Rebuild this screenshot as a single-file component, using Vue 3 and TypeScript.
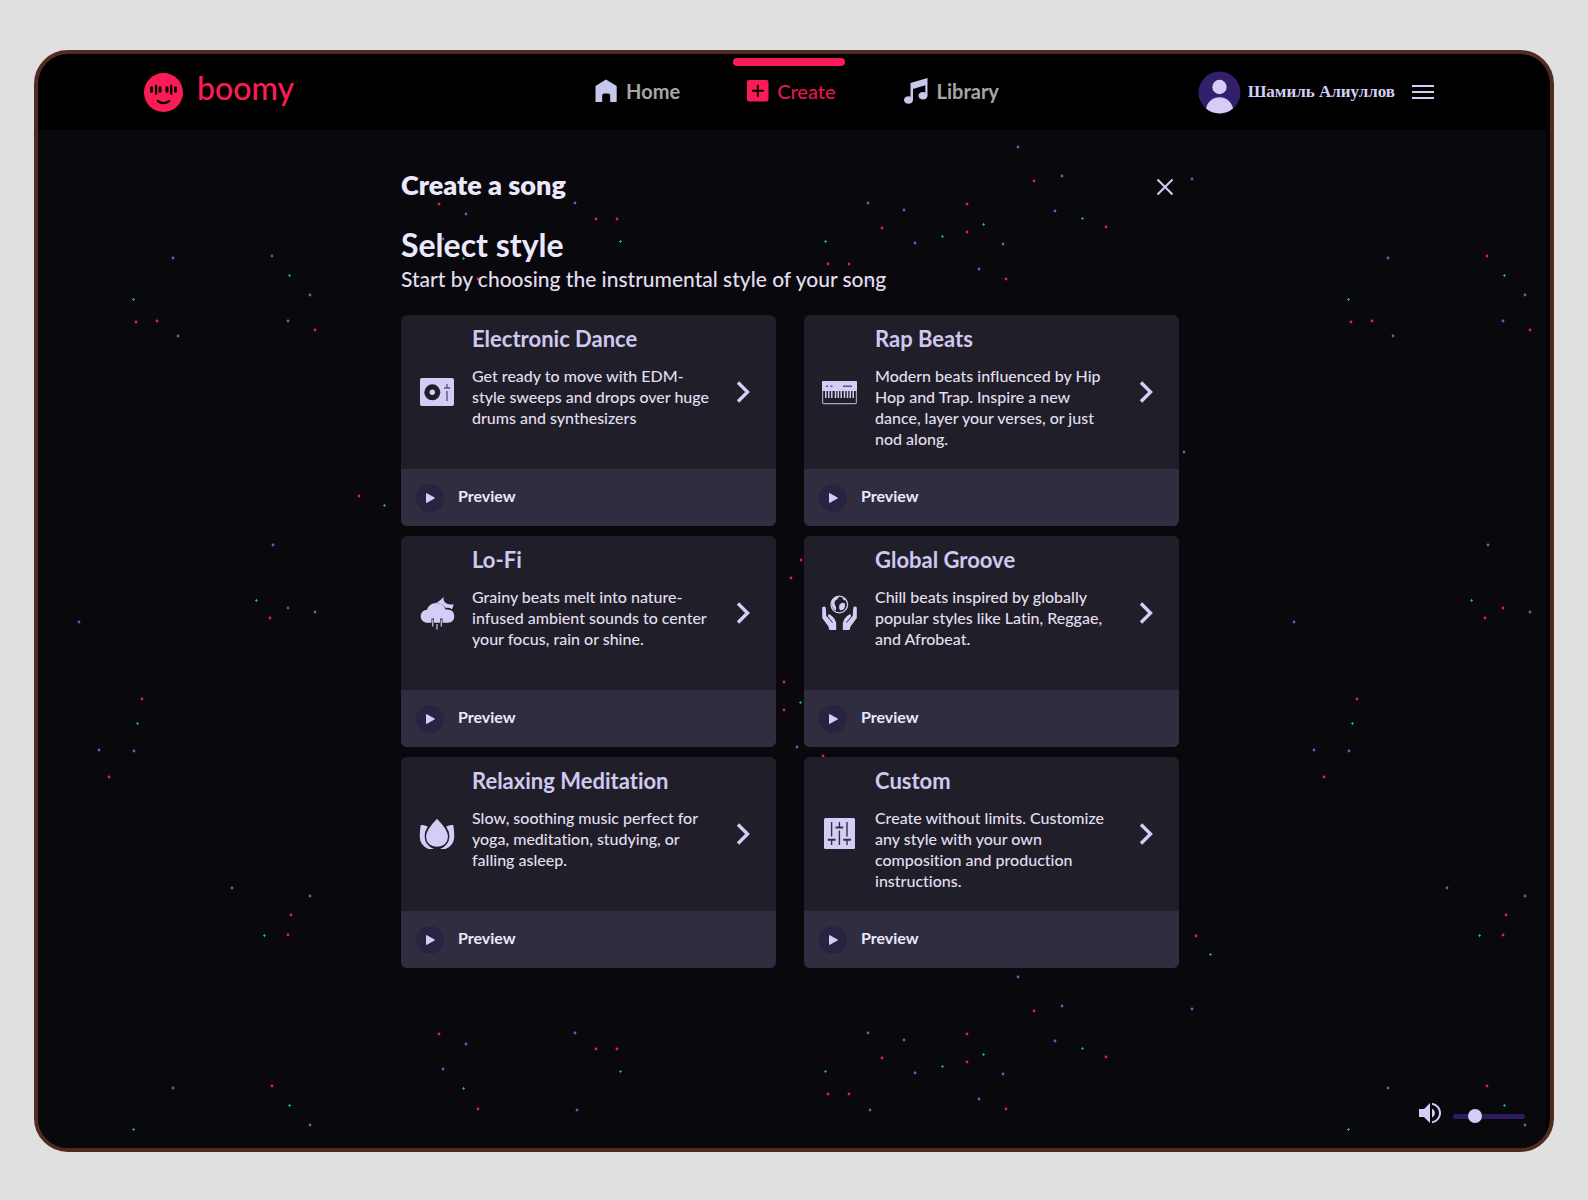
<script setup lang="ts">
import { ref } from 'vue'

type Point = [number, number]

interface Style {
  id: string
  title: string
  text: string
}

const styles: Style[] = [
  { id: 'edm', title: 'Electronic Dance', text: 'Get ready to move with EDM-style sweeps and drops over huge drums and synthesizers' },
  { id: 'rap', title: 'Rap Beats', text: 'Modern beats influenced by Hip Hop and Trap. Inspire a new dance, layer your verses, or just nod along.' },
  { id: 'lofi', title: 'Lo-Fi', text: 'Grainy beats melt into nature-infused ambient sounds to center your focus, rain or shine.' },
  { id: 'global', title: 'Global Groove', text: 'Chill beats inspired by globally popular styles like Latin, Reggae, and Afrobeat.' },
  { id: 'relax', title: 'Relaxing Meditation', text: 'Slow, soothing music perfect for yoga, meditation, studying, or falling asleep.' },
  { id: 'custom', title: 'Custom', text: 'Create without limits. Customize any style with your own composition and production instructions.' },
]

const volume = ref(26)

// Star positions inside one repeating tile of the night sky.
const violet: Point[] = [
  [980, 17], [1024, 46], [1154, 49], [1017, 81], [537, 73], [428, 84], [830, 73], [866, 80], [877, 113],
  [965, 114], [941, 139], [135, 128], [272, 165], [250, 191], [140, 206], [405, 109], [539, 150], [832, 150],
  [1146, 322], [235, 415], [41, 492], [277, 482], [61, 620], [96, 621], [194, 758], [272, 766], [759, 617],
]
const red: Point[] = [
  [996, 51], [401, 74], [558, 89], [579, 89], [929, 74], [844, 98], [929, 102], [1068, 97], [790, 134],
  [811, 134], [968, 149], [234, 126], [98, 192], [119, 191], [277, 200], [440, 149], [321, 366], [250, 478],
  [232, 488], [763, 430], [753, 448], [104, 569], [71, 647], [746, 552], [746, 580], [253, 785], [250, 805],
  [1158, 806], [785, 626],
]
const green: Point[] = [
  [582, 111], [787, 111], [945, 94], [904, 106], [1044, 88], [251, 145], [95, 169], [425, 128], [346, 375],
  [218, 470], [762, 572], [99, 593], [226, 805], [1172, 824],
]
</script>

<template>
  <div class="frame">
    <header class="topbar">
      <a class="brand" href="#">
        <svg width="39" height="39" viewBox="0 0 39 39" aria-hidden="true">
          <circle cx="19.5" cy="19.5" r="19.5" fill="#fb1c56" />
          <g stroke="#000" stroke-linecap="round" fill="none">
            <path stroke-width="3" d="M7.500 14.800v3.500M16 14.800v3.500M23 14.800v3.500M31.500 14.800v3.500" />
            <path stroke-width="2.200" d="M12 12.800v8M27.200 12.800v8" />
            <path stroke-width="2.200" d="M13.800 28q5.700 4.200 11.400 0" />
          </g>
        </svg>
        <span>boomy</span>
      </a>
      <nav class="nav">
        <a class="link" href="#">
          <svg width="24" height="26" viewBox="0 0 24 26" aria-hidden="true"><path fill="#c5c8ea" d="M12 1.500 22.700 8v15.500q0 .5-.5.500h-6v-6.500q0-2-2-2h-4q-2 0-2 2V24h-6.200q-.5 0-.5-.5V8z" /></svg>
          <span>Home</span>
        </a>
        <a class="link active" href="#" aria-current="page">
          <svg width="22" height="26" viewBox="0 0 22 26" aria-hidden="true"><rect x="0" y="2" width="21.500" height="21.500" rx="2" fill="#fb1c56" /><path stroke="#000" stroke-width="2" d="M4.800 12.800h12M10.800 6.800v12" /></svg>
          <span>Create</span>
        </a>
        <a class="link" href="#">
          <svg width="26" height="28" viewBox="0 0 26 28" aria-hidden="true">
            <path fill="#c5c8ea" d="M7.500 6 24.500 1v17.500h-2.200V8.300L10 12v11H7.500z" />
            <ellipse cx="5.500" cy="23" rx="4.500" ry="3.800" fill="#c5c8ea" />
            <ellipse cx="20" cy="18.700" rx="4.500" ry="3.800" fill="#c5c8ea" />
          </svg>
          <span>Library</span>
        </a>
      </nav>
      <div class="account">
        <svg width="43" height="43" viewBox="0 0 43 43" aria-hidden="true">
          <circle cx="21.500" cy="21.500" r="21" fill="#33206a" />
          <circle cx="21.500" cy="16" r="7.200" fill="#d5cdf5" />
          <path fill="#d5cdf5" d="M8 37.600a13.700 13.700 0 0 1 27 0A21 21 0 0 1 8 37.600z" />
        </svg>
        <span class="name">Шамиль Алиуллов</span>
        <button class="plain" type="button" aria-label="Menu">
          <svg width="22" height="16" viewBox="0 0 22 16" aria-hidden="true"><path stroke="#d5cdf5" stroke-width="2" d="M0 2h22M0 8h22M0 14h22" /></svg>
        </button>
      </div>
    </header>

    <main class="stage">
      <svg class="sky" width="100%" height="100%" aria-hidden="true">
        <defs>
          <pattern id="stars" width="1215" height="830" patternUnits="userSpaceOnUse">
            <circle v-for="(p, i) in violet" :key="'v' + i" :cx="p[0]" :cy="p[1]" r="1.400" fill="#6c5abf" />
            <circle v-for="(p, i) in red" :key="'r' + i" :cx="p[0]" :cy="p[1]" r="1.400" fill="#e81a50" />
            <path v-for="(p, i) in green" :key="'g' + i" :d="`M${p[0] - 1} ${p[1] + 0.5}h3M${p[0] + 0.5} ${p[1] - 1}v3`" stroke="#1a9c8c" />
          </pattern>
        </defs>
        <rect width="100%" height="100%" fill="url(#stars)" />
      </svg>

      <section class="content">
        <div class="heading">
          <h1>Create a song</h1>
          <button class="plain" type="button" aria-label="Close">
            <svg width="18" height="18" viewBox="0 0 18 18" aria-hidden="true"><path stroke="#d5cdf5" stroke-width="2" d="m1.500 1.500 15 15m0-15-15 15" /></svg>
          </button>
        </div>
        <h2>Select style</h2>
        <p class="lead">Start by choosing the instrumental style of your song</p>

        <div class="cards">
          <article v-for="s in styles" :key="s.id" class="card">
            <button class="choose" type="button">
              <svg class="icon" width="36" height="36" viewBox="0 0 36 36" aria-hidden="true" fill="#d5cdf5">
                <template v-if="s.id === 'edm'">
                  <rect x="1" y="4" width="34" height="28" rx="2" />
                  <circle cx="13.300" cy="18.300" r="8" fill="#201f29" />
                  <circle cx="13.300" cy="18.300" r="2.700" />
                  <path stroke="#5d5870" stroke-width="1.400" d="M25 14h6.200M28 10v4M28 17v10" />
                </template>
                <template v-else-if="s.id === 'rap'">
                  <rect x=".6" y="7.600" width="33.800" height="22" rx="1" fill="none" stroke="#a7a0c5" stroke-width="1.200" />
                  <rect x="0" y="7" width="35" height="10" rx="1" />
                  <path stroke="#5d5870" stroke-width="1.600" d="M4 12.300h2M8.500 12.300h2M21 12.300h9" />
                  <path stroke="#d5cdf5" stroke-width="1.500" d="M3.800 16v8M6.800 16v8M9.800 16v8M13.500 16v8M16.300 16v8M19.200 16v8M22.500 16v8M25.500 16v8M28.300 16v8M31.200 16v8" />
                </template>
                <template v-else-if="s.id === 'lofi'">
                  <path d="M15.500 8.500Q21 6.500 24.500 1.700q-.5 4.500 2.500 6.500 3 1.700 7.500 1-.2 3-1.600 5-3-2-6-1.300Q22 6.800 15.500 8.500z" />
                  <path d="M7 27.700a6.500 6.500 0 0 1 1-12.900 9.800 9.800 0 0 1 18.500-.3q8-1 8.800 6.200.1 6.500-6.500 7z" />
                  <path stroke="#201f29" stroke-width="2.400" d="M13.700 23.500v5M18 28.500v3M22.300 23.500v5" />
                  <path stroke="#b4add0" stroke-width="1.400" d="M13.700 24.500v7M18 29v5.500M22.300 24.500v7" />
                </template>
                <template v-else-if="s.id === 'global'">
                  <circle cx="17.300" cy="9.500" r="8.300" fill="none" stroke="#d5cdf5" stroke-width="1.300" />
                  <path d="M10 5q3-4.200 7-4-.5 2.300-2 3.600-3 1.400-2.300 4.600 2.300 3 1.300 6.500Q8 12.500 10 5zM17.500 9.500q3-3.200 5.500-.8.600 3-1.500 5.800l-3.500 1q-1.500-3-.5-6zM20 1.800q3 1.700 4 3.800l-2.500-.5z" />
                  <path d="M.2 12.500q1.800-1.800 3.500 0l.6 8 2 2.200q-1-3 1-3.400 5.700 3.300 6.900 8.700v7H7.500q-.2-3.800-3.300-6.500L.2 23z" />
                  <path d="M34.800 12.500q-1.800-1.800-3.500 0l-.6 8-2 2.200q1-3-1-3.400-5.700 3.300-6.900 8.700v7h6.700q.2-3.800 3.300-6.500l4-5.500z" />
                  <path fill="none" stroke="#201f29" d="m4.500 20.500 6 7M30.500 20.500l-6 7" />
                </template>
                <template v-else-if="s.id === 'relax'">
                  <path d="M18 2.700Q29 14 29 20.500q-.5 9.700-11 10.300Q7.500 30.200 7 20.500 7 14 18 2.700z" />
                  <path d="M1.800 9q3.500-.5 7 1.500-3.300 5-3.200 10Q6 29.500 15 33H9.500Q1 29.500.700 20.500q0-6.500 1.100-11.500zM34.200 9q-3.500-.5-7 1.500 3.300 5 3.200 10-.4 9-9.400 12.500h5.500q8.500-3.500 8.800-12.500 0-6.500-1.100-11.500z" />
                </template>
                <template v-else>
                  <rect x="2" y="2" width="31" height="31" rx="1.500" />
                  <g fill="none" stroke="#33313e" stroke-width="1.400">
                    <path d="M9.600 6v14.500M9.600 24v5M17.400 6v5M25 6v14.500M25 24v5M17.400 14.500V29" />
                    <path stroke-width="2" d="M5.700 23.800h7.800M13.600 11.500h7.600M21.200 23.800H29" />
                  </g>
                </template>
              </svg>
              <span class="copy">
                <span class="title">{{ s.title }}</span>
                <span class="text">{{ s.text }}</span>
              </span>
              <svg class="chevron" width="14" height="22" viewBox="0 0 14 22" aria-hidden="true"><path fill="none" stroke="#d5cdf5" stroke-width="3.400" d="m2 1.500 9.500 9.500L2 20.500" /></svg>
            </button>
            <button class="preview" type="button">
              <svg width="28" height="28" viewBox="0 0 28 28" aria-hidden="true">
                <circle cx="14" cy="14" r="14" fill="#292341" />
                <path fill="#d5cdf5" stroke="#d5cdf5" stroke-linejoin="round" d="M10.500 9.500 18.500 14l-8 4.500z" />
              </svg>
              <span>Preview</span>
            </button>
          </article>
        </div>
      </section>

      <div class="player">
        <svg width="22" height="22" viewBox="0 0 22 22" aria-hidden="true">
          <path fill="#d5cdf5" d="M0 7h5l6-6v20l-6-6H0zM13 6.500q3 1.700 3 4.500t-3 4.500z" />
          <path fill="none" stroke="#d5cdf5" stroke-width="2" d="M13 1.700a9.400 9.400 0 0 1 0 18.600" />
        </svg>
        <input v-model="volume" type="range" min="0" max="100" aria-label="Volume" />
      </div>
    </main>
  </div>
</template>

<style>
body {
  background: #e0e0e0;
}
</style>

<style scoped>
.frame {
  box-sizing: border-box;
  display: flex;
  flex-direction: column;
  min-height: calc(100vh - 98px);
  margin: 50px 34px 48px;
  border: 4px solid #532a22;
  border-radius: 34px;
  overflow: hidden;
  background: #000;
  font-family: Lato, "Open Sans", sans-serif;
  font-variant-ligatures: none;
  color: #ece8fb;
}
h1,
h2,
p {
  margin: 0;
}
a {
  color: inherit;
  text-decoration: none;
}
button {
  border: 0;
  padding: 0;
  background: none;
  color: inherit;
  font: inherit;
  font-variant-ligatures: none;
  text-align: left;
  cursor: pointer;
}
svg {
  display: block;
  flex: none;
}
.topbar {
  display: grid;
  grid-template-columns: 1fr auto 1fr;
  align-items: center;
  height: 76px;
  padding: 0 106px;
}
.brand {
  display: flex;
  align-items: center;
  gap: 14px;
  color: #fb1c56;
  font-size: 32px;
  font-weight: 500;
  line-height: 36px;
}
.brand span {
  padding-bottom: 8px;
}
.nav {
  display: flex;
  align-self: stretch;
  gap: 44px;
}
.link {
  position: relative;
  display: flex;
  align-items: center;
  gap: 8px;
  padding: 0 9px 2px 14px;
  color: #a6a6a6;
  font-size: 20px;
  font-weight: 700;
}
.active {
  color: #e01a4e;
  font-weight: 500;
}
.active::before {
  content: "";
  position: absolute;
  top: 4px;
  left: 0;
  right: 0;
  height: 8px;
  border-radius: 4px;
  background: #fb1c56;
}
.account {
  display: flex;
  align-items: center;
  justify-content: flex-end;
  padding-right: 10px;
}
.name {
  margin: 0 17px 0 7px;
  color: #d5cdf5;
  font: 700 17px "Liberation Serif", serif;
}
.stage {
  position: relative;
  flex: 1;
  display: flex;
  flex-direction: column;
  margin-right: 4px;
  padding: 0 4px 0 0;
  background: #09080d;
}
.sky {
  position: absolute;
  inset: 0;
}
.content {
  position: relative;
  box-sizing: border-box;
  width: 100%;
  max-width: 778px;
  margin: 0 auto;
  padding-top: 38px;
}
.heading {
  display: flex;
  align-items: center;
  justify-content: space-between;
  padding-right: 5px;
}
.heading .plain {
  padding-top: 4px;
}
h1 {
  font-size: 27px;
  font-weight: 800;
  line-height: 34px;
}
h2 {
  margin-top: 24px;
  font-size: 32px;
  font-weight: 700;
  line-height: 38px;
}
.lead {
  margin-bottom: 21px;
  color: #e2deef;
  font-size: 21px;
  font-weight: 500;
  line-height: 30px;
}
.cards {
  display: grid;
  grid-template-columns: 1fr 1fr;
  gap: 10px 28px;
}
.card {
  border-radius: 6px;
  overflow: hidden;
  background: #201f29;
}
.choose {
  box-sizing: border-box;
  display: flex;
  align-items: center;
  gap: 17px;
  width: 100%;
  min-height: 154px;
  padding: 9px 26px 9px 18px;
}
.copy {
  flex: 1;
  align-self: flex-start;
}
.title,
.text {
  display: block;
}
.title {
  color: #d0c8f0;
  font-size: 22px;
  font-weight: 700;
  line-height: 30px;
}
.text {
  max-width: 242px;
  margin-top: 11px;
  color: #e2deef;
  font-size: 16px;
  font-weight: 500;
  line-height: 21px;
}
.preview {
  display: flex;
  align-items: center;
  gap: 14px;
  width: 100%;
  height: 57px;
  padding: 0 15px;
  background: #302d40;
  font-size: 16px;
  font-weight: 700;
}
.preview span {
  padding-bottom: 4px;
}
.player {
  position: relative;
  display: flex;
  align-items: center;
  gap: 12px;
  margin: auto 17px 24px auto;
}
.player input {
  appearance: none;
  width: 72px;
  height: 14px;
  margin: 6px 0 0;
  background: none;
}
.player input::-webkit-slider-runnable-track {
  height: 5px;
  border-radius: 3px;
  background: #2f1c5e;
}
.player input::-webkit-slider-thumb {
  appearance: none;
  width: 14px;
  height: 14px;
  margin-top: -5px;
  border-radius: 50%;
  background: #d5cdf5;
}
</style>
